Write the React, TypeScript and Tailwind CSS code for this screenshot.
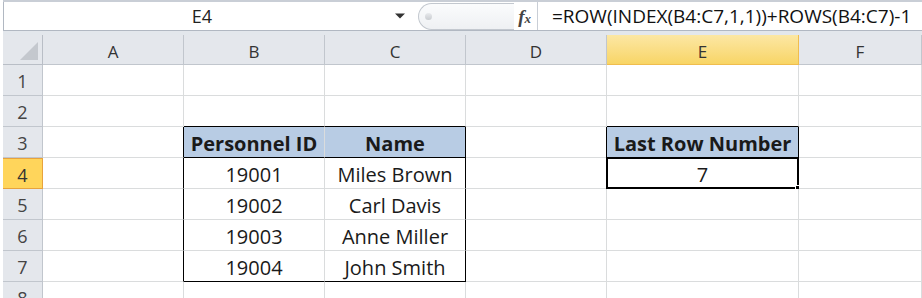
import React from "react";

const cols = ["A", "B", "C", "D", "E", "F"];

// cell text for rows 3..7
const cells: Record<string, string> = {
  B3: "Personnel ID",
  C3: "Name",
  E3: "Last Row Number",
  B4: "19001",
  C4: "Miles Brown",
  E4: "7",
  B5: "19002",
  C5: "Carl Davis",
  B6: "19003",
  C6: "Anne Miller",
  B7: "19004",
  C7: "John Smith",
};

const headerCells = ["B3", "C3", "E3"];

function cellClass(id: string) {
  const col = id[0];
  const row = Number(id.slice(1));
  let right = "border-r-[#dadcdd]";
  let bottom = "border-b-[#dadcdd]";
  // table B3:C7
  if (col === "A" && row >= 3 && row <= 7) right = "border-r-black";
  if (col === "C" && row >= 3 && row <= 7) right = "border-r-black";
  if ((col === "B" || col === "C") && (row === 2 || row === 3 || row === 7)) bottom = "border-b-black";
  // E3 box
  if (col === "D" && row === 3) right = "border-r-black";
  if (col === "E" && row === 3) right = "border-r-black";
  if (col === "E" && (row === 2 || row === 3)) bottom = "border-b-black";
  const fill = headerCells.includes(id) ? "bg-[#b8cce4] font-bold" : "bg-white";
  return `border-r border-b ${right} ${bottom} ${fill}`;
}

export default function App() {
  return (
    <div className="w-[922px] h-[298px] overflow-hidden bg-white font-['Open_Sans',sans-serif] text-[#1a1a1a] pl-[3px]">
      {/* formula bar */}
      <div className="flex h-[31px] border-t-2 border-[#c9ced6] border-b border-b-[#b1b8c2] bg-white">
        <div className="flex items-center w-[410px] border-l border-[#b1b8c2]">
          <div className="flex-1 text-center text-[18px] text-[#222] pl-[6px]">E4</div>
          <svg width="12" height="8" viewBox="0 0 12 8" className="mr-[7px]">
            <path d="M1 1.5h10L6 6.5z" fill="#333" />
          </svg>
        </div>
        <div className="flex items-center w-[124px] pl-[5px] pr-[6px]">
          <div className="flex-1 h-[27px] rounded-l-full border border-[#c3c8cf] border-r-0 bg-gradient-to-b from-[#fbfcfd] to-[#eef0f3] flex items-center pl-[6px]">
            <div className="w-[7px] h-[7px] rounded-full bg-gradient-to-b from-[#e8eaed] to-[#c9ccd0]" />
          </div>
          <span className="ml-[4px] font-['Liberation_Serif',serif] italic font-bold text-[19px] leading-none text-[#444]">
            f<span className="text-[13px] italic">x</span>
          </span>
        </div>
        <div className="flex-1 flex items-center border-l border-[#c9ced6] pl-[14px] text-[19px] text-[#111] whitespace-nowrap">
          =ROW(INDEX(B4:C7,1,1))+ROWS(B4:C7)-1
        </div>
      </div>
      <div className="h-[4px] bg-[#e3e7ec]" />

      {/* sheet */}
      <div className="grid grid-cols-[40px_141px_141px_141px_141px_192px_1fr] grid-rows-[30px_repeat(8,31px)]">
        <div className="bg-[#e4e7ec] border-r border-b border-[#b9bec6] flex items-end justify-end p-[4px]">
          <svg width="18" height="18" viewBox="0 0 18 18">
            <path d="M18 0V18H0z" fill="#c4c8ce" />
          </svg>
        </div>
        {cols.map((c) =>
          c === "E" ? (
            <div
              key={c}
              className="bg-gradient-to-b from-[#fce7a3] to-[#f8d565] border-r border-b border-[#f0bd4e] flex items-center justify-center pt-[4px] text-[17px] text-[#333]"
            >
              {c}
            </div>
          ) : (
            <div
              key={c}
              className="bg-[#e4e7ec] border-r border-b border-[#c1c6cd] flex items-center justify-center pt-[4px] text-[17px] text-[#333]"
            >
              {c}
            </div>
          )
        )}
        {[1, 2, 3, 4, 5, 6, 7, 8].map((r) => (
          <React.Fragment key={r}>
            {r === 4 ? (
              <div className="bg-[#ffd55b] border border-[#e8a33c] border-l-0 flex items-center justify-center pt-[3px] text-[18px] text-[#333]">
                {r}
              </div>
            ) : (
              <div className="bg-[#e4e7ec] border-r border-b border-[#c1c6cd] flex items-center justify-center pt-[3px] text-[18px] text-[#444]">
                {r}
              </div>
            )}
            {cols.map((c) => {
              const id = `${c}${r}`;
              return (
                <div
                  key={id}
                  className={`relative flex items-center justify-center pt-[4px] text-[20px] whitespace-nowrap ${cellClass(id)}`}
                >
                  {cells[id]}
                  {id === "E4" && (
                    <div className="absolute -left-[1px] -top-[1px] -right-[1px] -bottom-[1px] border-2 border-black">
                      <div className="absolute -right-[4px] -bottom-[4px] w-[6px] h-[6px] bg-black border border-white" />
                    </div>
                  )}
                </div>
              );
            })}
          </React.Fragment>
        ))}
      </div>
    </div>
  );
}
